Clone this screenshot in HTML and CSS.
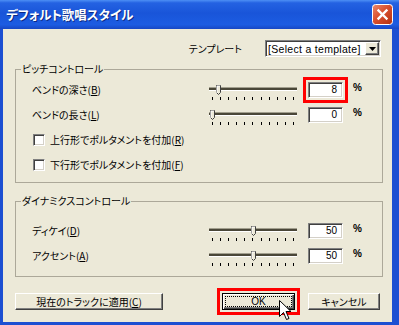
FILE: index.html
```html
<!DOCTYPE html>
<html lang="ja">
<head>
    <meta charset="UTF-8">
    <title>デフォルト歌唱スタイル</title>
    <link rel="stylesheet" href="styles.css">
</head>
<body>
    <div class="window">
        <div class="titlebar">
            <span class="title">デフォルト歌唱スタイル</span>
            <svg class="close" width="21" height="21" viewBox="0 0 21 21">
                <defs>
                    <linearGradient id="closeFill" x1="0" y1="0" x2="1" y2="1">
                        <stop offset="0" stop-color="#ec8a6c"/>
                        <stop offset="0.45" stop-color="#d9502f"/>
                        <stop offset="1" stop-color="#b3300f"/>
                    </linearGradient>
                </defs>
                <rect x="0.5" y="0.5" width="20" height="20" rx="3" fill="url(#closeFill)" stroke="#fff"/>
                <path d="M6.5 6.5 L14.5 14.5 M14.5 6.5 L6.5 14.5" stroke="#fff" stroke-width="2.4" stroke-linecap="square"/>
            </svg>
        </div>
        <div class="client">
            <div class="template-row">
                <span>テンプレート</span>
                <div class="select">
                    <span class="select-text">[Select a template]</span>
                    <span class="drop">
                        <svg width="7" height="4" viewBox="0 0 7 4"><path d="M0 0 H7 L3.5 4 Z" fill="#000"/></svg>
                    </span>
                </div>
            </div>

            <fieldset class="group group-pitch">
                <legend>ピッチコントロール</legend>
                <div class="group-body">
                    <div class="row">
                        <span class="row-label">ベンドの深さ(<u>B</u>)</span>
                        <div class="slider">
                            <div class="track"></div>
                            <div class="ticks"><i></i><i></i><i></i><i></i><i></i><i></i><i></i><i></i><i></i><i></i><i></i></div>
                            <svg class="thumb" style="left: 7px" width="5" height="10" viewBox="0 0 5 10"><path d="M0.5 0.5 H4.5 V7.5 L2.5 9.5 L0.5 7.5 Z" fill="#ece9d8" stroke="#404040"/><path d="M1 8 V1 H4" fill="none" stroke="#fff"/></svg>
                        </div>
                        <div class="num highlighted">8</div>
                        <span class="pct">%</span>
                    </div>
                    <div class="row">
                        <span class="row-label">ベンドの長さ(<u>L</u>)</span>
                        <div class="slider">
                            <div class="track"></div>
                            <div class="ticks"><i></i><i></i><i></i><i></i><i></i><i></i><i></i><i></i><i></i><i></i><i></i></div>
                            <svg class="thumb" style="left: 1px" width="5" height="10" viewBox="0 0 5 10"><path d="M0.5 0.5 H4.5 V7.5 L2.5 9.5 L0.5 7.5 Z" fill="#ece9d8" stroke="#404040"/><path d="M1 8 V1 H4" fill="none" stroke="#fff"/></svg>
                        </div>
                        <div class="num">0</div>
                        <span class="pct">%</span>
                    </div>
                    <div class="row">
                        <span class="check"></span>
                        <span>上行形でポルタメントを付加(<u>R</u>)</span>
                    </div>
                    <div class="row">
                        <span class="check"></span>
                        <span>下行形でポルタメントを付加(<u>F</u>)</span>
                    </div>
                </div>
            </fieldset>

            <fieldset class="group group-dynamics">
                <legend>ダイナミクスコントロール</legend>
                <div class="group-body">
                    <div class="row">
                        <span class="row-label">ディケイ(<u>D</u>)</span>
                        <div class="slider">
                            <div class="track"></div>
                            <div class="ticks"><i></i><i></i><i></i><i></i><i></i><i></i><i></i><i></i><i></i><i></i><i></i></div>
                            <svg class="thumb" style="left: 42px" width="5" height="10" viewBox="0 0 5 10"><path d="M0.5 0.5 H4.5 V7.5 L2.5 9.5 L0.5 7.5 Z" fill="#ece9d8" stroke="#404040"/><path d="M1 8 V1 H4" fill="none" stroke="#fff"/></svg>
                        </div>
                        <div class="num">50</div>
                        <span class="pct">%</span>
                    </div>
                    <div class="row">
                        <span class="row-label">アクセント(<u>A</u>)</span>
                        <div class="slider">
                            <div class="track"></div>
                            <div class="ticks"><i></i><i></i><i></i><i></i><i></i><i></i><i></i><i></i><i></i><i></i><i></i></div>
                            <svg class="thumb" style="left: 42px" width="5" height="10" viewBox="0 0 5 10"><path d="M0.5 0.5 H4.5 V7.5 L2.5 9.5 L0.5 7.5 Z" fill="#ece9d8" stroke="#404040"/><path d="M1 8 V1 H4" fill="none" stroke="#fff"/></svg>
                        </div>
                        <div class="num">50</div>
                        <span class="pct">%</span>
                    </div>
                </div>
            </fieldset>

            <div class="button-row">
                <button class="btn btn-apply">現在のトラックに適用(<u>C</u>)</button>
                <button class="btn btn-ok highlighted"><span class="focus">OK</span></button>
                <button class="btn btn-cancel">キャンセル</button>
            </div>
        </div>

        <svg class="cursor" width="13" height="22" viewBox="0 0 13 22">
            <path d="M0.5 0.5 V16.5 L4.5 12.5 L7.5 19.5 L10 18.5 L7 11.5 H12 Z" fill="#fff" stroke="#000" stroke-linejoin="miter"/>
        </svg>
    </div>
</body>
</html>
```

FILE: styles.css
```css
* {
    box-sizing: border-box;
}
body {
    margin: 0;
    font-family: "Noto Sans CJK JP", sans-serif;
    font-size: 10px;
    color: #000;
    font-feature-settings: "palt";
}
.window {
    position: relative;
    width: 399px;
    height: 325px;
    background: #1c4fd2;
    display: flex;
    flex-direction: column;
    overflow: hidden;
}
.titlebar {
    height: 29px;
    flex: none;
    display: flex;
    align-items: center;
    justify-content: space-between;
    padding: 0 6px;
    background: linear-gradient(to bottom, #4d8ff5 0%, #2462e2 10%, #1955d9 45%, #1c5ce2 85%, #1747c4 100%);
}
.title {
    color: #fff;
    font-weight: bold;
    font-size: 12.5px;
    text-shadow: 1px 1px 0 #0b2a86;
}
.close {
    display: block;
}
.client {
    flex: 1;
    margin: 0 7px 3px 3px;
    background: #ece9d8;
    padding: 11px 9px 0 12px;
    display: flex;
    flex-direction: column;
}
.template-row {
    height: 17px;
    display: flex;
    align-items: center;
    justify-content: flex-end;
    gap: 23px;
    padding-right: 2px;
}
.select {
    width: 116px;
    height: 17px;
    display: flex;
    align-items: center;
    background: #fff;
    border: 1px solid;
    border-color: #808080 #fff #fff #808080;
    box-shadow: inset 1px 1px 0 #404040, inset -1px -1px 0 #d4d0c8;
    padding: 1px 1px 1px 2px;
}
.select-text {
    flex: 1;
    min-width: 0;
    white-space: nowrap;
    overflow: hidden;
    font-family: "Liberation Sans", sans-serif;
    font-size: 10.5px;
    letter-spacing: 0.3px;
}
.drop {
    flex: none;
    width: 14px;
    height: 13px;
    display: flex;
    align-items: center;
    justify-content: center;
    background: #ece9d8;
    border: 1px solid;
    border-color: #fff #404040 #404040 #fff;
    box-shadow: inset -1px -1px 0 #808080;
}
.group {
    margin: 0;
    padding: 0;
    min-width: 0;
    border: 1px solid #aca899;
}
.group legend {
    margin-left: 5px;
    padding: 0 1px;
    line-height: 12px;
}
.group-pitch {
    margin-top: 6px;
}
.group-pitch .group-body {
    padding: 2px 0 5px 16px;
}
.group-dynamics {
    margin-top: 12px;
}
.group-dynamics .group-body {
    padding: 11px 0 8px 16px;
}
.row {
    height: 25px;
    display: flex;
    align-items: center;
}
.row-label {
    flex: 0 0 177px;
}
.slider {
    position: relative;
    width: 88px;
    height: 16px;
    margin-right: 11px;
    align-self: flex-start;
    margin-top: 7px;
}
.track {
    margin-top: 3px;
    height: 4px;
    background: #4a4738;
    border-top: 1px solid #a29f8e;
    border-bottom: 1px solid #fff;
}
.ticks {
    margin-top: 6px;
    padding: 0 3px;
    display: flex;
    justify-content: space-between;
}
.ticks i {
    width: 1px;
    height: 3px;
    background: #000;
}
.thumb {
    position: absolute;
    top: 1px;
}
.num {
    width: 35px;
    height: 16px;
    background: #fff;
    border: 1px solid;
    border-color: #808080 #fff #fff #808080;
    box-shadow: inset 1px 1px 0 #404040, inset -1px -1px 0 #d4d0c8;
    text-align: right;
    padding-right: 5px;
    font-family: "Liberation Sans", sans-serif;
    font-size: 10px;
    line-height: 14px;
}
.pct {
    margin-left: 10px;
    font-family: "Liberation Sans", sans-serif;
    font-weight: bold;
    font-size: 10px;
    align-self: flex-start;
    margin-top: 5px;
}
.check {
    width: 12px;
    height: 12px;
    margin: 0 5px 0 1px;
    background: #fff;
    border: 1px solid;
    border-color: #808080 #fff #fff #808080;
    box-shadow: inset 1px 1px 0 #404040, inset -1px -1px 0 #d4d0c8;
}
.highlighted {
    outline: 3px solid #f00;
    outline-offset: 2px;
}
.button-row {
    margin-top: 16px;
    padding-right: 3px;
    display: flex;
    align-items: center;
}
.btn {
    height: 17px;
    padding: 0;
    font-family: "Noto Sans CJK JP", sans-serif;
    font-size: 10px;
    font-feature-settings: "palt";
    color: #000;
    background: #ece9d8;
    border: 1px solid;
    border-color: #fff #404040 #404040 #fff;
    box-shadow: inset -1px -1px 0 #808080;
    display: flex;
    align-items: center;
    justify-content: center;
}
.btn-apply {
    width: 148px;
}
.btn-ok {
    width: 73px;
    margin-left: auto;
    margin-right: 13px;
    padding: 2px;
    border-color: #000;
    box-shadow: inset 1px 1px 0 #fff, inset -1px -1px 0 #404040, inset -2px -2px 0 #808080;
}
.btn-ok .focus {
    flex: 1;
    align-self: stretch;
    display: flex;
    align-items: center;
    justify-content: center;
    border: 1px dotted #000;
    font-family: "Liberation Sans", sans-serif;
}
.btn-cancel {
    width: 72px;
}
.cursor {
    position: absolute;
    left: 279px;
    top: 300px;
}
```
